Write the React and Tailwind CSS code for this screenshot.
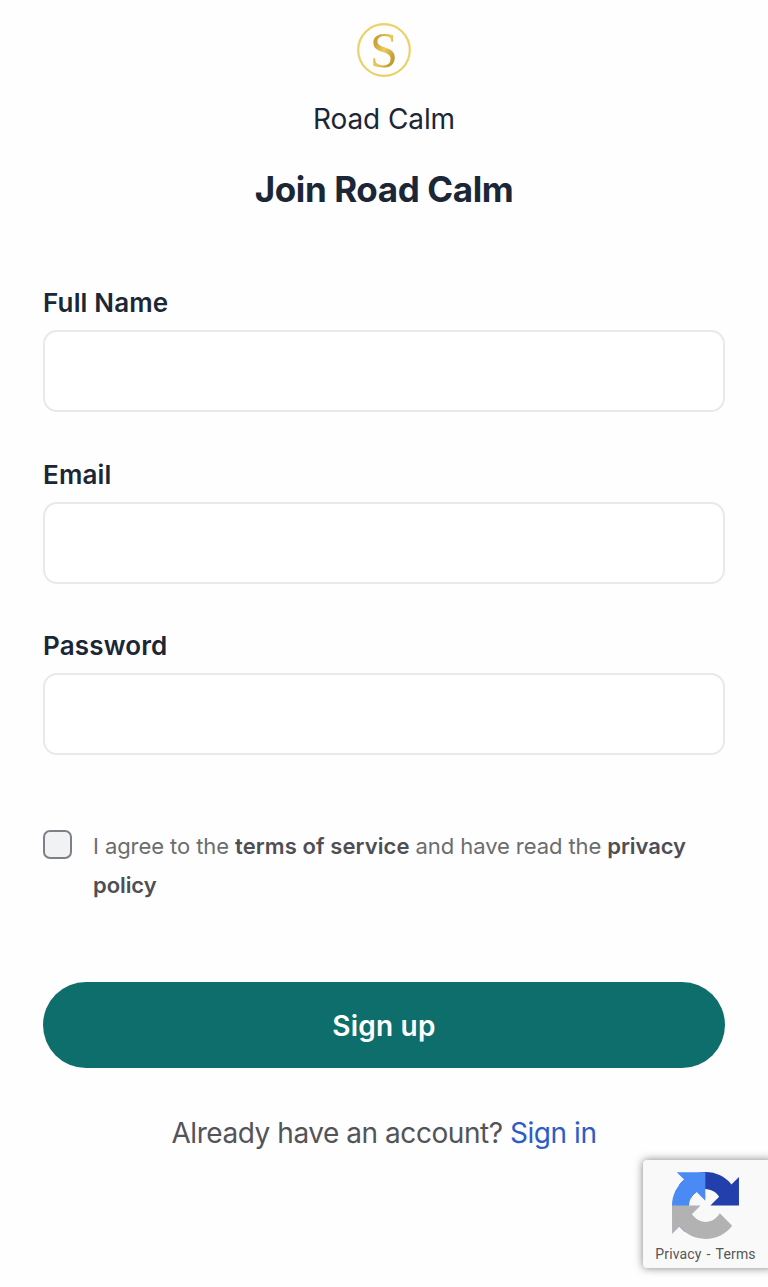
import React, { useState } from "react";

const FIELDS = [
  { name: "name", label: "Full Name", type: "text" },
  { name: "email", label: "Email", type: "email" },
  { name: "password", label: "Password", type: "password" },
];

export default function App() {
  const [data, setData] = useState({ name: "", email: "", password: "" });
  const [agreed, setAgreed] = useState(false);

  return (
    <div className="relative h-[1287px] w-full overflow-hidden bg-[#fefefe] px-[43px] pt-[23px] font-['Inter',sans-serif]">
      <header className="flex flex-col items-center text-[#1b2636]">
        <Logo />
        <p className="mt-[24px] text-[28px] leading-[36px] tracking-[-0.1px]">Road Calm</p>
        <h1 className="mt-[30px] text-[35px] leading-[44px] font-bold tracking-[-0.4px]">Join Road Calm</h1>
      </header>

      <form onSubmit={(e) => e.preventDefault()} className="mt-[74px]">
        <div className="flex flex-col gap-[44.5px]">
          {FIELDS.map((f) => (
            <Field
              key={f.name}
              label={f.label}
              type={f.type}
              value={data[f.name]}
              onChange={(v) => setData({ ...data, [f.name]: v })}
            />
          ))}
        </div>

        <label className="mt-[71px] flex items-start gap-[21px]">
          <input
            type="checkbox"
            checked={agreed}
            onChange={(e) => setAgreed(e.target.checked)}
            className="mt-[4px] size-[29px] shrink-0 appearance-none rounded-[7px] border-2 border-[#7f8085] bg-[#f1f2f4] checked:bg-[#0e6e6c]"
          />
          <span className="pt-[1px] text-[22px] leading-[39px] tracking-[-0.08px] text-[#6b6c70]">
            I agree to the <b className="font-semibold tracking-[0.08px] text-[#4e4f54]">terms of service</b> and have
            read the{" "}
            <b className="font-semibold text-[#4e4f54]">
              privacy
              <br />
              policy
            </b>
          </span>
        </label>

        <button className="mt-[77px] h-[86px] w-full rounded-full bg-[#0e6e6c] pt-[2px] text-[28px] font-semibold tracking-[0.2px] text-white">
          Sign up
        </button>
      </form>

      <p className="mt-[47px] text-center text-[28px] leading-[36px] tracking-[-0.45px] text-[#535459]">
        Already have an account?{" "}
        <a href="#" className="text-[#2c5cc5]">
          Sign in
        </a>
      </p>

      <RecaptchaBadge />
    </div>
  );
}

function Logo() {
  return (
    <svg width="54" height="54" viewBox="0 0 54 54">
      <defs>
        <linearGradient id="gold" x1="0" y1="0" x2="1" y2="1">
          <stop offset="0" stopColor="#b98f2c" />
          <stop offset="0.3" stopColor="#d0a53a" />
          <stop offset="0.5" stopColor="#e9cb5c" />
          <stop offset="0.75" stopColor="#c59a2c" />
          <stop offset="1" stopColor="#d9b548" />
        </linearGradient>
      </defs>
      <circle cx="27" cy="27" r="25.8" fill="none" stroke="#ecd169" strokeWidth="2.2" />
      <text x="27" y="44" textAnchor="middle" fontSize="50" fill="url(#gold)" className="font-['Liberation_Serif',serif]">
        S
      </text>
    </svg>
  );
}

function Field({ label, type, value, onChange }) {
  return (
    <label className="block">
      <span className="block text-[26px] leading-[36px] font-semibold tracking-[0.15px] text-[#1b2636]">{label}</span>
      <input
        type={type}
        value={value}
        onChange={(e) => onChange(e.target.value)}
        className="mt-[9px] block h-[82px] w-full rounded-[14px] border-2 border-[#e7e9ea] bg-white px-5 text-[26px] outline-none"
      />
    </label>
  );
}

function RecaptchaBadge() {
  return (
    <div className="absolute top-[1160px] right-[-6px] flex h-[108px] w-[131px] flex-col items-center rounded-[4px] bg-[#f9f9f9] pt-[12px] pr-[6px] shadow-[0_0_8px_rgba(0,0,0,0.5)]">
      <svg width="67" height="67" viewBox="0 0 64 64">
        <path
          fill="#233fac"
          d="M64 31.955l-.033-1.37V4.687l-7.16 7.16C50.948 4.674 42.033.093 32.05.093c-10.4 0-19.622 4.96-25.458 12.64l11.736 11.86a15.55 15.55 0 0 1 4.754-5.334c2.05-1.6 4.952-2.906 8.968-2.906.485 0 .86.057 1.135.163 4.976.393 9.288 3.14 11.828 7.124l-8.307 8.307L64 31.953"
        />
        <path
          fill="#4a8af4"
          d="M31.862.094l-1.37.033H4.594l7.16 7.16C4.58 13.147 0 22.06 0 32.046c0 10.4 4.96 19.622 12.64 25.458L24.5 45.768a15.55 15.55 0 0 1-5.334-4.754c-1.6-2.05-2.906-4.952-2.906-8.968 0-.485.057-.86.163-1.135.393-4.976 3.14-9.288 7.124-11.828l8.307 8.307L31.86.095"
        />
        <path
          fill="#b2b2b2"
          d="M.001 32.045l.033 1.37v25.898l7.16-7.16c5.86 7.173 14.774 11.754 24.76 11.754 10.4 0 19.622-4.96 25.458-12.64l-11.736-11.86a15.55 15.55 0 0 1-4.754 5.334c-2.05 1.6-4.952 2.906-8.968 2.906-.485 0-.86-.057-1.135-.163-4.976-.393-9.288-3.14-11.828-7.124l8.307-8.307c-10.522.04-22.4.066-27.295-.005"
        />
      </svg>
      <div className="mt-[5px] flex gap-[5px] font-['Roboto',sans-serif] text-[14px] leading-[20px] tracking-[0.15px] text-[#555]">
        <a href="#">Privacy</a>
        <span>-</span>
        <a href="#">Terms</a>
      </div>
    </div>
  );
}
